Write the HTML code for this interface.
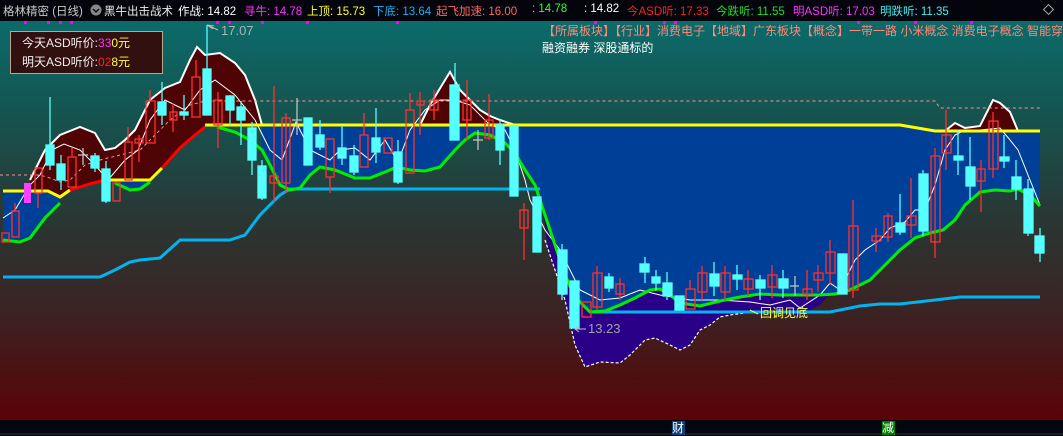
<!DOCTYPE html>
<html><head><meta charset="utf-8"><style>
html,body{margin:0;padding:0;width:1063px;height:436px;overflow:hidden;background:#000}
.t{position:absolute;top:3px;font:11.5px "Liberation Sans","Noto Sans CJK SC",sans-serif;white-space:nowrap}
svg{position:absolute;left:0;top:0}
</style></head><body>
<svg width="1063" height="436" xmlns="http://www.w3.org/2000/svg" font-family="Liberation Sans, Noto Sans CJK SC, sans-serif">
<defs><linearGradient id="bg" x1="0" y1="0" x2="0" y2="1">
<stop offset="0" stop-color="#0b6b6a"/><stop offset="0.25" stop-color="#16524e"/><stop offset="0.5" stop-color="#2a3633"/><stop offset="0.72" stop-color="#3a2424"/><stop offset="1" stop-color="#5a0206"/></linearGradient></defs>
<rect x="0" y="0" width="1063" height="21" fill="#04040c"/>
<rect x="0" y="21" width="1063" height="399" fill="url(#bg)"/>
<rect x="0" y="420" width="1063" height="16" fill="#03060e"/>
<line x1="0" y1="434" x2="1063" y2="434" stroke="#333"/>
<g fill="#ff00ff"><rect x="24" y="21" width="3" height="3"/><rect x="47" y="21" width="3" height="3"/><rect x="59" y="21" width="3" height="3"/><rect x="70" y="21" width="3" height="3"/><rect x="216" y="21" width="3" height="3"/><rect x="228" y="21" width="3" height="3"/><rect x="261" y="21" width="3" height="3"/><rect x="306" y="21" width="3" height="3"/><rect x="396" y="21" width="3" height="3"/><rect x="594" y="21" width="3" height="3"/><rect x="663" y="21" width="3" height="3"/><rect x="674" y="21" width="3" height="3"/><rect x="857" y="21" width="3" height="3"/><rect x="914" y="21" width="3" height="3"/><rect x="970" y="21" width="3" height="3"/></g>

<polygon fill="#2a0088" points="540,185 545,215 555,245 565,275 575,297 590,312 605,311 620,305 635,298 650,290 660,289 670,295 680,303 700,306 720,301 740,297 760,294 780,295 800,295 820,295 830,294 820,305 800,315 760,313 730,315 720,317 710,325 700,330 690,345 680,350 670,345 655,338 645,340 630,355 620,363 600,362 585,367 575,345 565,300 555,270 548,250"/>
<polygon fill="#003f98" points="3,191 48,191 60,197 60,203 45,218 30,237 20,240 3,242"/>
<polygon fill="#003f98" points="115,180 150,180 150,182 140,189 130,190 115,183"/>
<polygon fill="#003f98" points="262,125 900,125 935,131 1040,131 1040,206 1030,195 1018,189 1010,191 995,190 980,192 965,205 955,220 943,230 930,233 915,238 900,250 885,265 870,280 850,290 835,294 820,295 800,295 780,295 760,294 740,297 720,301 700,306 680,303 670,295 660,289 650,290 635,298 620,305 605,311 590,312 575,297 565,275 555,245 545,215 535,185 525,170 515,153 505,143 490,135 475,133 465,140 455,150 440,167 425,171 410,170 397,167 385,172 370,178 355,178 335,170 320,167 310,175 300,188 290,190 280,185 270,165 262,150"/>
<polygon fill="#4e0404" points="30,180 45,150 60,135 80,127 95,133 105,150 115,148 125,140 135,130 150,100 165,88 180,82 190,60 197,47 205,55 220,53 235,63 245,75 255,100 262,125 205,125 162,168 150,180 115,180 105,180 70,190 60,197 48,191 30,191"/>
<polygon fill="#4e0404" points="420,125 430,105 442,85 450,72 460,90 470,100 480,110 490,116 500,120 515,125"/>
<polygon fill="#4e0404" points="945,131 955,123 965,128 980,126 993,100 1000,103 1010,112 1018,131"/>
<g fill="none" stroke="#fff" stroke-width="2">
<polyline points="30,180 45,150 60,135 80,127 95,133 105,150 115,148 125,140 135,130 150,100 165,88 180,82 190,60 197,47 205,55 220,53 235,63 245,75 255,100 262,125"/>
<polyline points="420,125 430,105 442,85 450,72 460,90 470,100 480,110 490,116 500,120 515,125"/>
<polyline points="945,131 955,123 965,128 980,126 993,100 1000,103 1010,112 1018,131"/>
</g>
<polyline fill="none" stroke="#fff" stroke-width="1.2" stroke-dasharray="3,2" points="545,240 555,270 565,300 575,345 585,367 600,362 620,363 630,355 645,340 655,338 670,345 680,350 690,345 700,330 710,325 720,317 730,315 745,313"/>
<g fill="none" stroke="#ff9090" stroke-width="1" stroke-dasharray="3,3">
<polyline points="0,175 40,175 50,178 60,182 70,180 85,165 100,160 120,155 140,150 150,140 170,120 190,105 205,101 935,101 940,108 1040,108"/>
</g>
<polyline fill="none" stroke="#fff" stroke-width="1" points="3,218 15,210 30,185 40,175 52,150 64,144 80,150 95,165 108,180 125,160 138,150 150,120 165,100 185,110 200,90 215,80 235,95 255,120 270,150 282,160 296,122 310,150 330,160 340,150 355,148 370,160 385,140 398,162 410,130 425,110 440,100 455,100 470,105 490,125 505,130 515,150 525,180 530,200 545,230 560,250 580,290 600,300 620,298 640,290 660,295 690,300 720,300 750,302 770,305 790,300 800,308 820,295 830,283 840,290 855,260 865,250 880,240 890,228 905,222 915,210 925,210 935,185 945,150 955,135 965,130 980,130 1000,128 1010,140 1018,150 1030,180 1040,205"/>
<polyline fill="none" stroke="#ffff00" stroke-width="3" points="3,191 48,191 60,197 70,190"/>
<polyline fill="none" stroke="#ff0000" stroke-width="3" points="70,190 90,184 105,180"/>
<polyline fill="none" stroke="#ffff00" stroke-width="3" points="105,180 150,180 162,168"/>
<polyline fill="none" stroke="#ff0000" stroke-width="3" points="162,168 180,148 195,135 205,127"/>
<polyline fill="none" stroke="#ffff00" stroke-width="3" points="205,125 900,125 935,131 1040,131"/>
<polyline fill="none" stroke="#00b4f0" stroke-width="3" points="3,277 100,277 115,270 130,262 140,260 160,258 180,240 230,240 245,235 260,215 280,195 290,189 540,189"/>
<polyline fill="none" stroke="#00b4f0" stroke-width="3" points="590,312 830,312 840,310 860,306 880,304 900,304 935,300 960,297 1040,297"/>
<g fill="none" stroke="#00ee00" stroke-width="3">
<polyline points="3,240 20,242 30,238 45,218 60,203"/>
<polyline points="115,183 130,190 140,189 150,182"/>
<polyline points="217,127 235,132 250,140 262,150 270,165 280,185 290,190 300,188 310,175 320,167 335,170 355,178 370,178 385,172 397,167 410,170 425,171 440,167 455,150 465,140 475,133 490,135 505,143 515,153 525,170 535,185 545,215 555,245 565,275 575,297 590,312 605,311 620,305 635,298 650,290 660,289 670,295 680,303 700,306 720,301 740,297 760,294 780,295 800,295 820,295 835,294 850,290 870,280 885,265 900,250 915,238 930,233 943,230 955,220 965,205 980,192 995,190 1010,191 1018,189 1030,195 1040,206"/>
</g>
<g stroke="#ff3030" stroke-width="1.3" fill="none">
<rect x="2" y="233" width="7" height="9"/><rect x="12" y="211" width="7" height="26"/><line x1="15" y1="203" x2="15" y2="211"/>
<rect x="35" y="168" width="7" height="25"/><line x1="38" y1="193" x2="38" y2="208"/>
<rect x="68" y="157" width="8" height="30"/><line x1="72" y1="148" x2="72" y2="157"/>
<rect x="113" y="183" width="7" height="18"/>
<rect x="125" y="142" width="7" height="38"/><line x1="128" y1="127" x2="128" y2="142"/>
<rect x="135" y="139" width="8" height="4"/><line x1="139" y1="135" x2="139" y2="162"/>
<rect x="146" y="101" width="9" height="42"/><line x1="150" y1="90" x2="150" y2="101"/>
<rect x="170" y="112" width="7" height="8"/><line x1="173" y1="103" x2="173" y2="132"/>
<rect x="192" y="77" width="8" height="40"/><line x1="196" y1="60" x2="196" y2="77"/>
<rect x="214" y="100" width="8" height="25"/><line x1="218" y1="92" x2="218" y2="148"/>
<rect x="270" y="176" width="8" height="7"/><line x1="274" y1="86" x2="274" y2="202"/>
<rect x="282" y="118" width="8" height="65"/><line x1="286" y1="113" x2="286" y2="193"/>
<rect x="326" y="139" width="8" height="38"/><line x1="330" y1="177" x2="330" y2="193"/>
<rect x="360" y="135" width="8" height="32"/><line x1="364" y1="113" x2="364" y2="135"/>
<rect x="384" y="138" width="8" height="15"/>
<rect x="406" y="110" width="8" height="63"/><line x1="410" y1="93" x2="410" y2="110"/>
<rect x="417" y="101" width="7" height="4"/><line x1="420" y1="92" x2="420" y2="135"/>
<rect x="430" y="100" width="8" height="10"/><line x1="434" y1="90" x2="434" y2="120"/>
<rect x="463" y="100" width="8" height="20"/><line x1="467" y1="80" x2="467" y2="140"/>
<rect x="485" y="120" width="8" height="18"/><line x1="489" y1="94" x2="489" y2="140"/>
<rect x="520" y="210" width="8" height="18"/><line x1="524" y1="203" x2="524" y2="260"/>
<rect x="582" y="302" width="9" height="15"/>
<rect x="593" y="273" width="9" height="34"/><line x1="597" y1="266" x2="597" y2="310"/>
<rect x="616" y="284" width="8" height="10"/><line x1="620" y1="278" x2="620" y2="300"/>
<rect x="686" y="289" width="9" height="20"/><line x1="690" y1="280" x2="690" y2="289"/>
<rect x="698" y="273" width="9" height="19"/><line x1="702" y1="266" x2="702" y2="300"/>
<rect x="721" y="273" width="9" height="19"/><line x1="725" y1="266" x2="725" y2="300"/>
<rect x="744" y="279" width="9" height="10"/><line x1="748" y1="270" x2="748" y2="296"/>
<rect x="768" y="275" width="9" height="12"/><line x1="772" y1="265" x2="772" y2="298"/>
<rect x="803" y="289" width="9" height="5"/><line x1="807" y1="270" x2="807" y2="300"/>
<rect x="814" y="273" width="9" height="7"/><line x1="818" y1="265" x2="818" y2="292"/>
<rect x="826" y="252" width="9" height="21"/><line x1="830" y1="240" x2="830" y2="285"/>
<rect x="849" y="226" width="9" height="64"/><line x1="853" y1="200" x2="853" y2="298"/>
<rect x="872" y="236" width="9" height="5"/><line x1="876" y1="228" x2="876" y2="252"/>
<rect x="884" y="216" width="8" height="21"/><line x1="888" y1="213" x2="888" y2="242"/>
<rect x="907" y="216" width="9" height="9"/><line x1="911" y1="178" x2="911" y2="238"/>
<rect x="931" y="156" width="9" height="86"/><line x1="935" y1="148" x2="935" y2="258"/>
<rect x="942" y="135" width="9" height="18"/><line x1="946" y1="110" x2="946" y2="170"/>
<rect x="977" y="169" width="8" height="12"/><line x1="981" y1="160" x2="981" y2="212"/>
<rect x="989" y="121" width="9" height="48"/><line x1="993" y1="112" x2="993" y2="178"/>
</g>
<rect x="24" y="183" width="7" height="20" fill="#ff40ff"/>
<g fill="#55ffff" stroke="#55ffff" stroke-width="1.3">
<rect x="46" y="145" width="8" height="20"/><line x1="50" y1="97" x2="50" y2="170"/>
<rect x="57" y="164" width="8" height="16"/><line x1="61" y1="155" x2="61" y2="190"/>
<rect x="91" y="156" width="8" height="12"/><line x1="95" y1="153" x2="95" y2="172"/>
<rect x="102" y="169" width="8" height="32"/><line x1="106" y1="161" x2="106" y2="203"/>
<rect x="158" y="102" width="8" height="13"/><line x1="162" y1="82" x2="162" y2="125"/>
<rect x="180" y="112" width="8" height="3"/><line x1="184" y1="95" x2="184" y2="120"/>
<rect x="203" y="69" width="8" height="46"/><line x1="207" y1="25" x2="207" y2="69"/>
<rect x="226" y="96" width="8" height="14"/><line x1="230" y1="95" x2="230" y2="126"/>
<rect x="237" y="107" width="8" height="13"/><line x1="241" y1="101" x2="241" y2="145"/>
<rect x="248" y="128" width="8" height="32"/><line x1="252" y1="122" x2="252" y2="175"/>
<rect x="258" y="166" width="8" height="32"/><line x1="262" y1="160" x2="262" y2="200"/>
<rect x="304" y="118" width="8" height="47"/>
<rect x="316" y="135" width="8" height="12"/><line x1="320" y1="120" x2="320" y2="150"/>
<rect x="338" y="148" width="8" height="10"/><line x1="342" y1="125" x2="342" y2="165"/>
<rect x="350" y="156" width="8" height="16"/><line x1="354" y1="145" x2="354" y2="175"/>
<rect x="372" y="138" width="8" height="14"/><line x1="376" y1="108" x2="376" y2="163"/>
<rect x="394" y="152" width="8" height="30"/><line x1="398" y1="140" x2="398" y2="184"/>
<rect x="450" y="85" width="9" height="55"/><line x1="455" y1="63" x2="455" y2="85"/>
<rect x="496" y="125" width="8" height="25"/><line x1="500" y1="120" x2="500" y2="165"/>
<rect x="510" y="126" width="8" height="70"/>
<rect x="533" y="197" width="8" height="55"/>
<rect x="558" y="250" width="9" height="44"/><line x1="562" y1="244" x2="562" y2="300"/>
<rect x="570" y="281" width="9" height="47"/>
<rect x="605" y="277" width="8" height="11"/><line x1="609" y1="273" x2="609" y2="292"/>
<rect x="640" y="264" width="9" height="8"/><line x1="645" y1="257" x2="645" y2="283"/>
<rect x="652" y="277" width="8" height="6"/><line x1="656" y1="270" x2="656" y2="290"/>
<rect x="663" y="283" width="9" height="13"/><line x1="667" y1="272" x2="667" y2="300"/>
<rect x="675" y="296" width="9" height="14"/>
<rect x="710" y="274" width="9" height="12"/><line x1="714" y1="262" x2="714" y2="296"/>
<rect x="733" y="275" width="9" height="4"/><line x1="737" y1="265" x2="737" y2="290"/>
<rect x="756" y="280" width="9" height="8"/><line x1="760" y1="275" x2="760" y2="300"/>
<rect x="779" y="279" width="9" height="9"/><line x1="783" y1="270" x2="783" y2="298"/>
<rect x="838" y="254" width="9" height="40"/>
<rect x="896" y="223" width="9" height="9"/><line x1="900" y1="194" x2="900" y2="235"/>
<rect x="919" y="174" width="9" height="57"/><line x1="923" y1="170" x2="923" y2="236"/>
<rect x="954" y="156" width="9" height="4"/><line x1="958" y1="130" x2="958" y2="175"/>
<rect x="966" y="167" width="9" height="19"/><line x1="970" y1="137" x2="970" y2="200"/>
<rect x="1000" y="157" width="9" height="4"/><line x1="1004" y1="135" x2="1004" y2="168"/>
<rect x="1012" y="177" width="9" height="12"/><line x1="1016" y1="160" x2="1016" y2="200"/>
<rect x="1024" y="189" width="9" height="44"/><line x1="1028" y1="179" x2="1028" y2="236"/>
<rect x="1035" y="236" width="9" height="17"/><line x1="1040" y1="228" x2="1040" y2="262"/>
</g>
<g stroke="#c0c0c0" stroke-width="1.3"><line x1="78" y1="155" x2="88" y2="155"/><line x1="83" y1="148" x2="83" y2="165"/><line x1="292" y1="120" x2="302" y2="120"/><line x1="297" y1="98" x2="297" y2="135"/><line x1="473" y1="140" x2="483" y2="140"/><line x1="478" y1="130" x2="478" y2="150"/><line x1="790" y1="286" x2="799" y2="286"/><line x1="795" y1="276" x2="795" y2="296"/></g>
<g fill="none" stroke="#bbb"><polyline points="214,26 207,25 213,29"/><line x1="207" y1="25" x2="218" y2="30"/><line x1="575" y1="329" x2="586" y2="329"/><polyline points="579,326 575,329 579,332"/></g>
<text x="221" y="35" fill="#aab4b4" font-size="13">17.07</text>
<text x="588" y="333" fill="#a0a0b0" font-size="13">13.23</text>
<line x1="750" y1="310" x2="758" y2="314" stroke="#ffff40"/>
<text x="760" y="317" fill="#ffff40" font-size="12">回调见底</text>
<rect x="10.5" y="31.5" width="152" height="42" fill="#331010" stroke="#b8a890"/>
<text x="22" y="47" font-size="12" fill="#f0f0f0">今天ASD听价:<tspan fill="#ff30ff">33</tspan><tspan fill="#ffff40">0元</tspan></text>
<text x="22" y="66" font-size="12" fill="#f0f0f0">明天ASD听价:<tspan fill="#ff2020">02</tspan><tspan fill="#ffff40">8元</tspan></text>
<text x="543" y="35" font-size="12" fill="#ff8878">【所属板块】【行业】消费电子【地域】广东板块【概念】一带一路 小米概念 消费电子概念 智能穿</text>
<text x="542" y="52" font-size="12" fill="#ffffff">融资融券 深股通标的</text>
<rect x="672" y="421" width="13" height="14" fill="#10407a"/><text x="672" y="432" font-size="12" fill="#fff">财</text>
<rect x="882" y="421" width="13" height="14" fill="#008000"/><text x="882" y="432" font-size="12" fill="#fff">减</text>
<circle cx="96" cy="10" r="5.5" fill="#888"/><polyline points="93,9 96,12 99,9" fill="none" stroke="#111" stroke-width="1.5"/>
<rect x="1045" y="6" width="7" height="7" fill="none" stroke="#aaa" transform="rotate(45 1048.5 9.5)"/>
</svg>
<span class="t" style="left:3px;color:#c8c8c8">格林精密 (日线)</span>
<span class="t" style="left:104px;color:#e8e8e8">黑牛出击战术</span>
<span class="t" style="left:178px;color:#fff">作战: 14.82</span>
<span class="t" style="left:244px;color:#ff30ff">寻牛: 14.78</span>
<span class="t" style="left:307px;color:#ffff30">上顶: 15.73</span>
<span class="t" style="left:373px;color:#20b0f0">下底: 13.64</span>
<span class="t" style="left:436px;color:#ff6a5a">起飞加速: 16.00</span>
<span class="t" style="left:532px;color:#30ff30">: 14.78</span>
<span class="t" style="left:584px;color:#fff">: 14.82</span>
<span class="t" style="left:627px;color:#ff2020">今ASD听: 17.33</span>
<span class="t" style="left:716px;color:#20e020">今跌听: 11.55</span>
<span class="t" style="left:793px;color:#ff30ff">明ASD听: 17.03</span>
<span class="t" style="left:880px;color:#40f0f0">明跌听: 11.35</span>
</body></html>
